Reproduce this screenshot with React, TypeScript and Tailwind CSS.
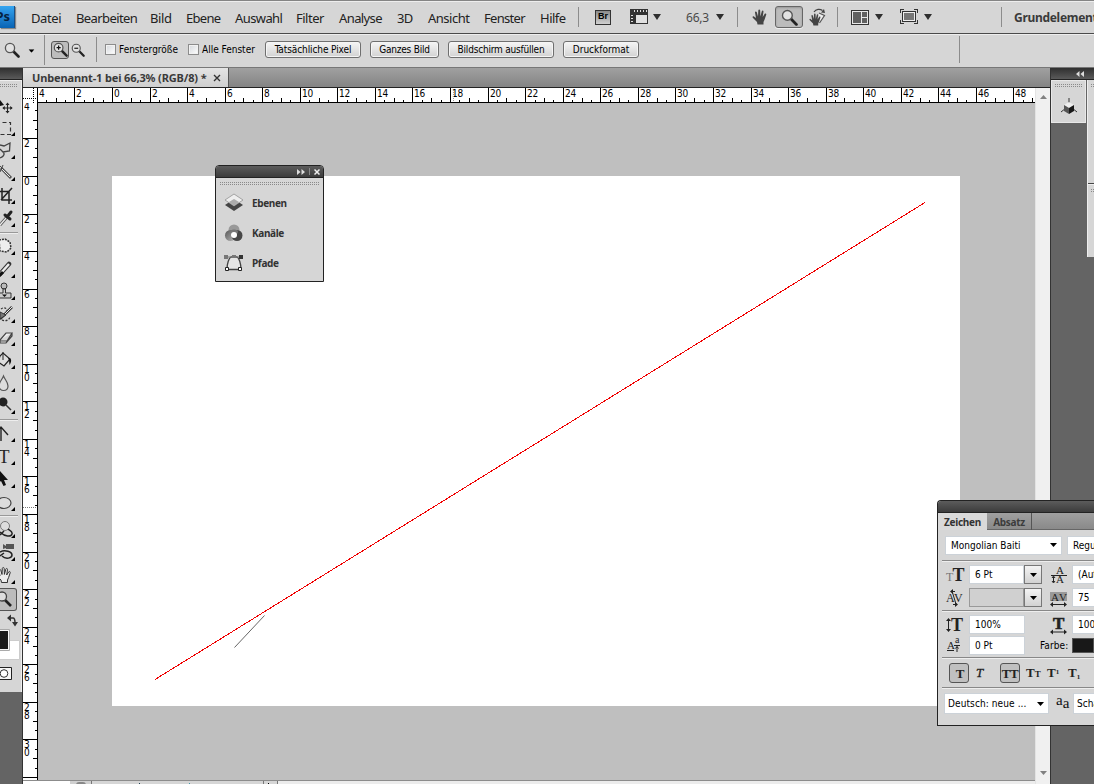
import React from "react";

const SMALL = "font-['DejaVu_Sans_Condensed','DejaVu_Sans',sans-serif] text-[10px] text-black whitespace-nowrap";
const UI = "font-['Noto_Sans','Open_Sans',sans-serif] whitespace-nowrap";

const Caret = ({ className = "" }: { className?: string }) => (
  <svg width="8" height="6" viewBox="0 0 8 6" className={"shrink-0 " + className}>
    <path d="M0 0H8L4 6Z" fill="#2f2f2f" />
  </svg>
);
const SmallCaret = ({ className = "" }: { className?: string }) => (
  <svg width="7" height="4" viewBox="0 0 7 4" className={"shrink-0 " + className}>
    <path d="M0 0H7L3.5 4Z" fill="#000" />
  </svg>
);

const menus: { label: string; cls: string }[] = [
  { label: "Datei", cls: "w-[45px] tracking-[-0.4px]" },
  { label: "Bearbeiten", cls: "w-[74px] tracking-[-0.6px]" },
  { label: "Bild", cls: "w-[36px] tracking-[-0.4px]" },
  { label: "Ebene", cls: "w-[49px] tracking-[-0.7px]" },
  { label: "Auswahl", cls: "w-[61px] tracking-[-0.6px]" },
  { label: "Filter", cls: "w-[43px] tracking-[-0.5px]" },
  { label: "Analyse", cls: "w-[58px] tracking-[-0.6px]" },
  { label: "3D", cls: "w-[31px] tracking-[-0.6px]" },
  { label: "Ansicht", cls: "w-[56px] tracking-[-0.5px]" },
  { label: "Fenster", cls: "w-[56px] tracking-[-0.7px]" },
  { label: "Hilfe", cls: "w-[38px] tracking-[-0.5px]" },
];

const HAND =
  "M5.5 15.5 L5 13 L1 9 C0 8 .8 6.8 2 7.4 L4 9 L3 3.5 C2.8 2.2 4.4 2 4.8 3.2 L6 7.5 L6.3 1.5 C6.4 .2 8.1 .2 8.2 1.5 L8.4 7.4 L9.8 2.2 C10.2 1 11.7 1.4 11.5 2.6 L10.7 8 L12.6 5 C13.3 4 14.7 4.6 14.2 5.8 L12.6 10.5 L11.5 13 V15.5Z";

const Lens = ({ sign = "", size = 16 }: { sign?: string; size?: number }) => (
  <svg width={size} height={size} viewBox="0 0 16 16" className="shrink-0">
    <path d="M9.5 9.5L14.5 14.5" stroke="#222" strokeWidth="2.6" strokeLinecap="round" />
    <circle cx="6" cy="6" r="4.6" fill="#e2e2e2" stroke="#555" strokeWidth="1.3" />
    {sign !== "" && <path d="M3.8 6H8.2" stroke="#111" strokeWidth="1.3" />}
    {sign === "+" && <path d="M6 3.8V8.2" stroke="#111" strokeWidth="1.3" />}
  </svg>
);

function MenuBar() {
  return (
    <div className="flex h-[34px] shrink-0 items-center border-b border-b-[#4a4a4a] border-t border-t-[#858585] bg-[#d6d6d6] shadow-[inset_0_1px_0_#eee]">
      <div className="flex h-[22px] w-[15px] shrink-0 items-center justify-end overflow-hidden border-r border-[#1a4f86] bg-linear-to-b from-[#35a5f0] to-[#0763b4] shadow-[1px_1px_1px_#888]">
        <span className={UI + " pr-[4px] text-[13px] font-bold text-[#06233f]"}>Ps</span>
      </div>
      <div className={UI + " flex pl-[16px] pt-[2px] text-[13px] leading-[18px] text-[#222]"}>
        {menus.map((m) => (
          <span key={m.label} className={m.cls + " shrink-0"}>{m.label}</span>
        ))}
      </div>
      <div className="h-5 w-px shrink-0 bg-[#8c8c8c]" />
      <div className="ml-[16px] flex h-[15px] w-4 shrink-0 items-center justify-center border border-[#333] bg-linear-to-b from-[#8a8a8a] to-[#d0d0d0] font-['Liberation_Sans',sans-serif] text-[9px] font-bold text-black">
        Br
      </div>
      <svg width="18" height="16" viewBox="0 0 18 16" className="ml-[19px] shrink-0" shapeRendering="crispEdges">
        <path d="M0 0H18V5H5V15H0Z" fill="#333" />
        <path d="M5 5H17.5V14.5H5Z" fill="#e0e0e0" stroke="#333" />
        <path d="M4.500 1V3M7.500 1V3M10.500 1V3M13.500 1V3M16.500 1V3M1 6.500H3M1 9.500H3M1 12.500H3" stroke="#ddd" />
      </svg>
      <Caret className="ml-[5px]" />
      <span className={UI + " ml-[25px] w-[23px] pt-px text-[12px] text-[#4a4a4a] tracking-[-0.2px]"}>66,3</span>
      <Caret className="ml-[7px]" />
      <div className="ml-[13px] h-5 w-px shrink-0 bg-[#8c8c8c]" />
      <svg width="16" height="16" viewBox="0 0 16 16" className="ml-[14px] shrink-0"><path d={HAND} fill="#444" /></svg>
      <div className="ml-[7px] flex h-[22px] w-[28px] shrink-0 items-center justify-center rounded-[3px] border border-[#666] bg-[#bcbcbc] shadow-[inset_0_1px_2px_#999,0_1px_0_#eee]">
        <Lens size={17} />
      </div>
      <svg width="18" height="18" viewBox="0 0 18 18" className="ml-[6px] shrink-0">
        <path d="M10 5L15.5 7.5L10.5 15" fill="#eee" stroke="#555" strokeWidth="1.2" />
        <g transform="translate(0 5) scale(.8)"><path d={HAND} fill="#444" /></g>
        <path d="M5 4C7 .8 11 .6 13.5 2.5" fill="none" stroke="#444" strokeWidth="1.2" />
        <path d="M12 4.5L16 5L15 1Z" fill="#444" />
      </svg>
      <div className="ml-[10px] h-5 w-px shrink-0 bg-[#8c8c8c]" />
      <svg width="18" height="15" viewBox="0 0 18 15" className="ml-[13px] shrink-0" shapeRendering="crispEdges">
        <path d="M.5 .5H17.5V14.5H.5Z" fill="#e8e8e8" stroke="#333" />
        <path d="M2 2H10V13H2ZM11 2H16V7H11ZM11 8H16V13H11Z" fill="#606060" />
      </svg>
      <Caret className="ml-[6px]" />
      <svg width="18" height="16" viewBox="0 0 18 16" className="ml-[17px] shrink-0" shapeRendering="crispEdges">
        <path d="M.5 4V.5H4M14 .5H17.5V4M17.5 11V14.5H14M4 14.5H.5V11" fill="none" stroke="#333" />
        <path d="M2.5 2.5H15.5V12.5H2.5Z" fill="#eee" stroke="#333" />
        <path d="M4 4H14V11H4Z" fill="#777" />
      </svg>
      <Caret className="ml-[6px]" />
      <div className="ml-[69px] h-5 w-px shrink-0 bg-[#8c8c8c]" />
      <span className={UI + " ml-[12px] pt-[2px] text-[12px] font-bold tracking-[-0.3px] text-[#3a3a3a]"}>Grundelemente</span>
    </div>
  );
}

const Check = ({ label, cls }: { label: string; cls: string }) => (
  <div className={"flex shrink-0 items-center " + cls}>
    <span className="size-[11px] border border-[#8c8c8c] bg-linear-to-br from-[#d5d8dc] to-white shadow-[inset_0_0_0_1px_#f2f2f2]" />
    <span className={SMALL + " ml-[3px]"}>{label}</span>
  </div>
);
const Btn = ({ label, cls }: { label: string; cls: string }) => (
  <button className={SMALL + " flex h-[17px] shrink-0 items-center justify-center rounded-[3px] border border-[#6f6f6f] bg-linear-to-b from-[#f6f6f6] to-[#d2d2d2] shadow-[inset_0_0_0_1px_#f5f5f5] " + cls}>
    {label}
  </button>
);

function OptionsBar() {
  return (
    <div className="flex h-[34px] shrink-0 items-center border-b border-b-[#777] border-t border-t-[#eee] bg-[#d6d6d6] pb-[3px]">
      <div className="ml-[4px] flex"><Lens size={16} /></div>
      <SmallCaret className="ml-[8px] mt-[2px] scale-[0.85]" />
      <div className="ml-[9px] h-[30px] w-px shrink-0 bg-[#8c8c8c]" />
      <div className="ml-[6px] flex h-[18px] w-[18px] shrink-0 items-center justify-center rounded-[3px] border border-[#555] bg-[#bdbdbd]"><Lens sign="+" size={15} /></div>
      <div className="ml-[2px] flex"><Lens sign="-" size={14} /></div>
      <div className="ml-[11px] h-[25px] w-px shrink-0 bg-[#8c8c8c]" />
      <Check label="Fenstergröße" cls="ml-[8px] w-[83px]" />
      <Check label="Alle Fenster" cls="w-[77px]" />
      <Btn label="Tatsächliche Pixel" cls="w-[96px] tracking-[-0.1px]" />
      <Btn label="Ganzes Bild" cls="ml-[9px] w-[69px] tracking-[-0.2px]" />
      <Btn label="Bildschirm ausfüllen" cls="ml-[9px] w-[106px] tracking-[-0.2px]" />
      <Btn label="Druckformat" cls="ml-[9px] w-[76px]" />
      <div className="ml-[320px] h-[27px] w-px shrink-0 bg-[#8c8c8c]" />
    </div>
  );
}

const Grip = ({ width, className = "" }: { width: number; className?: string }) => (
  <svg width={width} height="3" viewBox={`0 0 ${width} 3`} className={"shrink-0 " + className} shapeRendering="crispEdges">
    <path d={`M0 .5H${width}M0 2.5H${width}`} stroke="#8a8a8a" strokeDasharray="1 1" />
  </svg>
);

const Corner = () => <path d="M15 19V15L11 19Z" fill="#000" />;

const tools: { id: string; art: React.ReactNode; gap?: boolean; nofly?: boolean }[] = [
  { id: "move", nofly: true, art: <><path d="M0 6L4 11L0 12Z" fill="#111" /><path d="M7.5 9.5V18.5M3 14H12" stroke="#222" strokeWidth="1.1" /><path d="M5.5 11L7.5 8.5L9.5 11ZM5.5 17L7.5 19.5L9.5 17ZM4.8 12L2.3 14L4.8 16ZM10.2 12L12.7 14L10.2 16Z" fill="#222" /></> },
  { id: "marquee", art: <path d="M-4 5.5H10.5V17.5H-4" fill="none" stroke="#333" strokeWidth="1.2" strokeDasharray="4 2.5" /> },
  { id: "lasso", art: <path d="M0 5L4 6L10 3L9.5 11L3 12L0 9M3 12C6 15 2 17 0 18" fill="none" stroke="#444" strokeWidth="1.3" /> },
  { id: "wand", art: <><path d="M1 6L11 16" stroke="#555" strokeWidth="3" /><path d="M1 6L10 15" stroke="#eee" strokeWidth="1" /><path d="M-1 3L4 8M0 10L3 3" stroke="#444" /></> },
  { id: "crop", art: <path d="M2 3V15H12M0 6.5H9V19M1 15L12 3" fill="none" stroke="#222" strokeWidth="1.5" /> },
  { id: "eyedropper", art: <><path d="M0 17L7 9" stroke="#555" strokeWidth="3" /><path d="M0 17L7 9" stroke="#eee" strokeWidth="1.2" /><path d="M5 7L10 11M7 9L11 4" stroke="#222" strokeWidth="3" strokeLinecap="round" /></> },
  { id: "heal", gap: true, art: <path d="M-1 4L5 3L10 6L11 12L7 16L0 15Z" fill="#eee" stroke="#333" strokeWidth="1.5" strokeDasharray="2 1" /> },
  { id: "brush", art: <><path d="M0 15L9 5" stroke="#333" strokeWidth="4.5" strokeLinecap="round" /><path d="M1 14L9 5" stroke="#eee" strokeWidth="2.4" /><path d="M-1 17L3 13" stroke="#111" strokeWidth="3" /></> },
  { id: "stamp", art: <><circle cx="4" cy="5" r="3" fill="#bbb" stroke="#333" /><path d="M3 8H5.5V12H11V17H-2V12H3Z" fill="#ccc" stroke="#333" /><path d="M2 13.5H7L4.5 16Z" fill="#111" /></> },
  { id: "history", art: <><path d="M1 5C5 2 8 5 7 9M2 16C7 18 10 15 10 12" fill="none" stroke="#333" strokeDasharray="2 1.5" strokeWidth="1.2" /><path d="M0 15L12 3" stroke="#333" strokeWidth="2.5" /><path d="M5 10L12 3" stroke="#eee" strokeWidth="1" /><path d="M0 8L6 11L0 15Z" fill="#777" stroke="#333" /></> },
  { id: "eraser", art: <path d="M0 13L6 6H12L7 14H0ZM0 13V16H6L12 9V6" fill="#eee" stroke="#444" strokeWidth="1.2" /> },
  { id: "bucket", art: <><path d="M0 6L3 3L10 9L4 16L-2 12Z" fill="#ddd" stroke="#222" strokeWidth="1.2" /><path d="M3 10V2" stroke="#222" /><path d="M8 8C13 8 11 13 9.5 15L9 10Z" fill="#111" /></> },
  { id: "drop", art: <path d="M3.5 3C5 7 8 9 8 13C8 19-1 19-1 13C-1 9 2 7 3.5 3Z" fill="#ddd" stroke="#555" strokeWidth="1.2" /> },
  { id: "dodge", art: <><circle cx="3" cy="7" r="4.5" fill="#222" /><path d="M6 10L11 15" stroke="#333" strokeWidth="1.5" /></> },
  { id: "pen", gap: true, art: <path d="M1 18V5M-3 9L1 4L8 12" fill="none" stroke="#222" strokeWidth="1.4" /> },
  { id: "type", art: <text x="-1.5" y="17" fontFamily="Liberation Serif, serif" fontSize="18" fill="#222">T</text> },
  { id: "select", art: <path d="M0 2L8 11L4 11L6 16L3.5 17L1 12L-3 15Z" fill="#111" /> },
  { id: "ellipse", art: <ellipse cx="4" cy="11" rx="7" ry="5.5" fill="#ddd" stroke="#444" strokeWidth="1.2" /> },
  { id: "orbit", gap: true, art: <><circle cx="5" cy="7" r="4.5" fill="#ddd" stroke="#777" /><path d="M0 13C5 18 11 18 12 15C13 12 9 11 8 10M0 16L4 12" fill="none" stroke="#222" strokeWidth="1.5" /></> },
  { id: "camera", art: <><path d="M6 2H14V7H6ZM3 2L6 4V6L3 7Z" fill="#555" /><path d="M0 10C5 7 12 10 12 13C12 16 6 18 2 14M0 14L4 11" fill="none" stroke="#222" strokeWidth="1.5" /></> },
  { id: "hand", art: <g transform="translate(-4 2)"><path d={HAND} fill="#eee" stroke="#333" /></g> },
];

function ToolBar() {
  return (
    <div className="flex h-full w-[23px] shrink-0 flex-col border-r border-[#333] bg-[#646464]">
      <div className="h-[12px] shrink-0 border-b border-[#222] bg-linear-to-b from-[#303030] to-[#5a5a5a]" />
      <div className="flex h-[612px] shrink-0 flex-col bg-[#d6d6d6] shadow-[inset_-1px_1px_0_#eee]">
        <Grip width={18} className="mt-[4px]" />
        <div className="h-[7px] shrink-0" />
        {tools.map((t) => (
          <React.Fragment key={t.id}>
            {t.gap && <div className="mb-[2px] mt-[1px] h-[2px] w-[18px] shrink-0 border-b border-[#eee] border-t border-t-[#999]" />}
            <svg width="21" height="22.8" viewBox="0 0 21 22.8" className="block shrink-0">
              {t.art}
              {!t.nofly && <Corner />}
            </svg>
          </React.Fragment>
        ))}
        <div className="flex h-[23px] w-[17px] shrink-0 items-center overflow-hidden rounded-r-[3px] border border-l-0 border-[#555] bg-[#bcbcbc]">
          <svg width="16" height="20" viewBox="0 0 16 20"><path d="M5 11L11 17" stroke="#222" strokeWidth="2.6" /><circle cx="2" cy="7.500" r="4.5" fill="#ddd" stroke="#444" strokeWidth="1.3" /></svg>
        </div>
        <svg width="21" height="72" viewBox="0 611 21 72" className="shrink-0">
          <path d="M9 618H13Q15 618 15 623" fill="none" stroke="#333" strokeWidth="1.5" />
          <path d="M11 614.500L7 618L11 621.500ZM12 622H18L15 626.500Z" fill="#333" />
          <path d="M-1 640.500H19.500V659.500H-1Z" fill="#fff" stroke="#ccc" />
          <path d="M-1 629.500H9.500V650.500H-1Z" fill="#f5f5f5" stroke="#aaa" />
          <path d="M0 631H8V649H0Z" fill="#181818" />
          <path d="M-1 667.500H11.500V679.500H-1Z" fill="#f6f6f6" stroke="#222" />
          <circle cx="4" cy="673.500" r="3.800" fill="#fff" stroke="#333" />
        </svg>
      </div>
    </div>
  );
}

const STEP = 37.56;

function HRuler() {
  const ticks: React.ReactNode[] = [];
  for (let i = -8; i <= 98; i++) {
    const x = Math.round(112 - 23 + (i * STEP) / 4);
    const len = i % 4 === 0 ? 15 : i % 2 === 0 ? 5 : 3;
    ticks.push(<rect key={i} x={x} y={15 - len} width="1" height={len} fill="#000" />);
    if (i % 4 === 0)
      ticks.push(
        <text key={"t" + i} x={x + 2} y="8.5" fontSize="10" fill="#000" fontFamily="DejaVu Sans Condensed, DejaVu Sans, sans-serif" letterSpacing="-0.2">
          {Math.abs(i / 2)}
        </text>,
      );
  }
  return (
    <svg width="1012" height="15" viewBox="0 0 1012 15" className="block shrink-0 bg-white" shapeRendering="crispEdges">
      <path d="M0 0H14V15H0Z" fill="#fff" />
      <path d="M10.500 0V15M0 10.500H14" stroke="#000" strokeDasharray="1 1" />
      <path d="M14.500 0V15" stroke="#999" />
      {ticks}
      <path d="M430.500 2V14" stroke="#999" strokeDasharray="1 1" />
      <path d="M14 14.500H1012" stroke="#000" />
    </svg>
  );
}

function VRuler() {
  const ticks: React.ReactNode[] = [];
  for (let i = -7; i <= 64; i++) {
    const y = Math.round(176 - 103 + (i * STEP) / 4);
    const len = i % 4 === 0 ? 15 : i % 2 === 0 ? 5 : 3;
    ticks.push(<rect key={i} x={15 - len} y={y} width={len} height="1" fill="#000" />);
    if (i % 4 === 0 && i < 64)
      String(Math.abs(i / 2)).split("").forEach((d, k) =>
        ticks.push(
          <text key={"t" + i + k} x="1" y={y + 9 + k * 8} fontSize="10" fill="#000" fontFamily="DejaVu Sans Condensed, DejaVu Sans, sans-serif">
            {d}
          </text>,
        ),
      );
  }
  return (
    <svg width="15" height="677" viewBox="0 0 15 677" className="block shrink-0 bg-white" shapeRendering="crispEdges">
      {ticks}
      <text x="1" y="7" fontSize="10" fill="#000" fontFamily="DejaVu Sans Condensed, DejaVu Sans, sans-serif">4</text>
      <path d="M14.500 0V677" stroke="#000" />
      <path d="M0 404.500H14" stroke="#777" strokeDasharray="1 1" />
    </svg>
  );
}

function Document() {
  return (
    <div className="flex h-full w-[1027px] shrink-0 flex-col">
      <div className="flex h-[20px] shrink-0 items-stretch border-b border-[#222] bg-linear-to-b from-[#a0a0a0] to-[#848484]">
        <div className="flex w-[206px] shrink-0 items-center border-r border-[#555] bg-linear-to-b from-[#e4e4e4] to-[#cfcfcf] pl-[9px]">
          <span className={UI + " w-[181px] pt-px text-[11px] font-bold tracking-[-0.13px] text-[#3a3a3a]"}>Unbenannt-1 bei 66,3% (RGB/8) *</span>
          <svg width="8" height="8" viewBox="0 0 8 8" className="mt-px"><path d="M1 1L7 7M7 1L1 7" stroke="#333" strokeWidth="1.400" /></svg>
        </div>
      </div>
      <div className="flex min-h-0 flex-1">
        <div className="flex w-[1012px] shrink-0 flex-col">
          <HRuler />
          <div className="flex h-[677px] shrink-0">
            <VRuler />
            <div className="w-[997px] bg-[#bfbfbf] pl-[74px] pt-[73px]">
              <svg width="848" height="530" viewBox="112 176 848 530" className="block bg-white">
                <path d="M155 679.500L925 202.500" stroke="#f00000" shapeRendering="crispEdges" />
                <path d="M234.500 647.500L264.500 615.500" stroke="#555" strokeWidth="0.9" />
              </svg>
            </div>
          </div>
          <div className="flex h-[4px] shrink-0 overflow-hidden border-t border-[#8c8c8c]">
            <div className="w-[47px] bg-white" />
            <div className="flex w-[22px] justify-center border-r border-[#777] bg-[#d0d0d0]"><span className="mt-px h-[6px] w-[10px] rounded-full border-2 border-[#888]" /></div>
            <div className="flex w-[172px] gap-[49px] border-r border-[#777] bg-[#d6d6d6] pl-[47px] pt-[2px]">
              <div className="h-px w-px bg-[#245]" />
              <div className="h-px w-px bg-[#49a]" />
            </div>
            <div className="w-[14px] border-r border-[#777] bg-[#d6d6d6] pl-[4px] pt-[2px]"><div className="h-px w-px bg-black" /></div>
            <div className="flex-1 bg-[#ececec]" />
          </div>
        </div>
        <div className="flex w-[15px] shrink-0 flex-col items-center justify-between border-l border-[#e3e3e3] bg-[#f0f0f0] pb-[9px] pt-[7px]">
          <svg width="7" height="4" viewBox="0 0 7 4"><path d="M0 4L3.500 0L7 4Z" fill="#808080" /></svg>
          <svg width="7" height="4" viewBox="0 0 7 4"><path d="M0 0L3.500 4L7 0Z" fill="#808080" /></svg>
        </div>
      </div>
    </div>
  );
}

function Dock() {
  return (
    <div className="flex h-full w-[44px] shrink-0 flex-col border-l border-[#333] bg-[#646464]">
      <div className="flex h-[12px] shrink-0 items-center border-b border-[#222] bg-linear-to-b from-[#303030] to-[#5a5a5a] pl-[25px]">
        <svg width="8" height="6" viewBox="0 0 8 6"><path d="M0 3L3.500 0V6ZM4.500 3L8 0V6Z" fill="#ddd" /></svg>
      </div>
      <div className="flex">
        <div className="flex h-[43px] w-[35px] flex-col items-center border border-[#e8e8e8] bg-[#d6d6d6] pt-[3px]">
          <Grip width={27} />
          <svg width="16" height="17" viewBox="0 0 16 17" className="mt-[11px]">
            <path d="M8 0V7M5 10L0 14M11 10L16 14" stroke="#333" />
            <path d="M8 4L13 7L8 10L3 7Z" fill="#eee" />
            <path d="M3 7L8 10V16L3 13Z" fill="#555" />
            <path d="M13 7L8 10V16L13 13Z" fill="#181818" />
          </svg>
        </div>
        <div className="ml-px flex h-[177px] w-[7px] flex-col border-l border-l-[#eee] bg-[#d6d6d6] pl-[3px]">
          <Grip width={4} className="mt-[4px]" />
          <div className="-ml-[3px] mt-[96px] h-[2px] border-b border-[#eee] border-t border-t-[#444]" />
          <Grip width={4} className="mt-[4px]" />
        </div>
      </div>
    </div>
  );
}

function LayersPanel() {
  const row = "flex h-[30px] items-center pl-[7px]";
  const label = UI + " ml-[8px] text-[10px] font-bold tracking-[-0.35px] text-[#333]";
  return (
    <div className="absolute left-[215px] top-[165px] flex h-[117px] w-[109px] flex-col overflow-hidden rounded-t-[4px] border border-[#222] bg-[#d6d6d6]">
      <div className="flex h-[12px] shrink-0 items-center justify-end border-b border-[#222] bg-linear-to-b from-[#5c5c5c] to-[#3c3c3c] pr-[3px]">
        <svg width="8" height="6" viewBox="0 0 8 6"><path d="M0 0L3.500 3L0 6ZM4.500 0L8 3L4.500 6Z" fill="#ddd" /></svg>
        <div className="ml-[4px] h-[7px] w-px bg-[#888]" />
        <svg width="6" height="6" viewBox="0 0 6 6" className="ml-[4px]"><path d="M.5 .5L5.500 5.500M5.500 .5L.5 5.500" stroke="#eee" strokeWidth="1.500" /></svg>
      </div>
      <Grip width={99} className="mx-[4px] mb-[3px] mt-[4px]" />
      <div className={row}>
        <svg width="21" height="20" viewBox="0 0 21 20"><path d="M2 12L11 6L20 12L11 18Z" fill="#444" /><path d="M2 7L11 1L20 7L11 13Z" fill="#eee" stroke="#888" strokeWidth=".7" /><path d="M6 9L11 6L16 9L11 13Z" fill="#aaa" /></svg>
        <span className={label}>Ebenen</span>
      </div>
      <div className={row}>
        <svg width="21" height="20" viewBox="0 0 21 20">
          <defs>
            <linearGradient id="ch" x1="0" y1="0" x2="1" y2="1"><stop offset="0" stopColor="#555" /><stop offset="1" stopColor="#bbb" /></linearGradient>
          </defs>
          <circle cx="11" cy="7" r="5.500" fill="#999" /><circle cx="7.500" cy="12.500" r="5.500" fill="url(#ch)" /><circle cx="14" cy="12.500" r="5.500" fill="#484848" /><path d="M7 8C9 6 13 6 15 8C15 11 13 12 11 12C9 12 7 11 7 8Z" fill="#777" /><circle cx="11" cy="12" r="3" fill="#fff" />
        </svg>
        <span className={label}>Kanäle</span>
      </div>
      <div className={row}>
        <svg width="21" height="20" viewBox="0 0 21 20"><path d="M4 16.500C4 10 6 5 8 4H14C16 5 18 10 18 16.500Z" fill="#e5e5e5" stroke="#444" strokeWidth="1.300" /><path d="M1 4H20" stroke="#777" /><path d="M1 2H5V6H1ZM9 2H13V5H9Z" fill="#777" /><path d="M16 2H20V6H16Z" fill="#333" /><path d="M2.500 14.500H5.500V17.500H2.500ZM15.500 14.500H18.500V17.500H15.500Z" fill="#fff" stroke="#222" /></svg>
        <span className={label}>Pfade</span>
      </div>
    </div>
  );
}

const Drop = () => (
  <div className="flex h-full w-[18px] shrink-0 items-center justify-center border border-[#777] bg-linear-to-b from-[#f4f4f4] to-[#d2d2d2]"><SmallCaret /></div>
);
const BOX = SMALL + " flex shrink-0 items-center border border-[#ccd2d8] bg-white";
const FIELD = BOX + " h-[19px] pl-[5px]";
const SERIF = "Liberation Serif, serif";
const Glyph = ({ children, w = 20 }: { children: React.ReactNode; w?: number }) => (
  <svg width={w} height="20" viewBox={`0 0 ${w} 20`} className="shrink-0" fontFamily={SERIF} fill="#222" stroke="none">{children}</svg>
);

function CharacterPanel() {
  return (
    <div className="absolute left-[937px] top-[500px] flex h-[226px] w-[157px] flex-col overflow-hidden rounded-tl-[4px] border border-r-0 border-[#222] bg-[#d6d6d6]">
      <div className="h-[12px] shrink-0 border-b border-[#222] bg-linear-to-b from-[#5c5c5c] to-[#3c3c3c]" />
      <div className={UI + " flex h-[17px] shrink-0 bg-linear-to-b from-[#a0a0a0] to-[#888] text-[10px] font-bold tracking-[-0.3px]"}>
        <div className="flex w-[49px] items-center justify-center bg-[#d9d9d9] pt-px text-[#333]">Zeichen</div>
        <div className="flex w-[45px] items-center justify-center border-r border-[#555] pt-px text-[#3c3c3c] shadow-[inset_0_-1px_0_#666]">Absatz</div>
        <div className="flex-1 shadow-[inset_0_-1px_0_#666]" />
      </div>
      <div className="flex h-[30px] shrink-0 items-center pl-[7px]">
        <div className={FIELD + " w-[117px] justify-between pr-[4px]"}>Mongolian Baiti<SmallCaret /></div>
        <div className={FIELD + " ml-[5px] w-[60px]"}>Regular</div>
      </div>
      <div className="ml-[4px] h-[2px] shrink-0 border-b border-[#eee] border-t border-t-[#888]" />
      <div className="flex h-[25px] shrink-0 items-center pl-[7px]">
        <Glyph><text x="1" y="16" fontSize="12" fill="#777">T</text><text x="7.500" y="16" fontSize="18" fontWeight="bold">T</text></Glyph>
        <div className={FIELD + " ml-[4px] w-[55px]"}>6 Pt</div><div className="flex h-[19px]"><Drop /></div>
        <div className="ml-[7px] flex"><Glyph><text x="7" y="9" fontSize="11">A</text><text x="7" y="18" fontSize="11">A</text><path d="M2 10.500H18M4.500 12V17M3 13L4.500 11L6 13M3 16L4.500 18L6 16" fill="none" stroke="#222" /></Glyph></div>
        <div className={FIELD + " ml-[3px] w-[60px]"}>(Auto)</div>
      </div>
      <div className="flex h-[21px] shrink-0 items-center pl-[7px]">
        <Glyph><text x="1" y="14" fontSize="12">A</text><text x="9" y="14" fontSize="12">V</text><path d="M7 3L11 16M6 3.500H10M8 16.500H12" fill="none" stroke="#222" /><path d="M8 1L5 3.500L8 6ZM10 14L13 16.500L10 19Z" /></Glyph>
        <div className="ml-[4px] h-[19px] w-[55px] shrink-0 border border-[#999] bg-[#d0d0d0]" /><div className="flex h-[19px] shrink-0"><Drop /></div>
        <div className="ml-[7px] flex shrink-0"><Glyph><path d="M1 4H18V13H1Z" fill="#999" /><text x="2" y="12.500" fontSize="11">A</text><text x="10" y="12.500" fontSize="11">V</text><path d="M3 16.500H16" stroke="#222" /><path d="M1 16.500L4 14V19ZM18 16.500L15 14V19Z" /></Glyph></div>
        <div className={FIELD + " ml-[3px] w-[60px]"}>75</div>
      </div>
      <div className="ml-[4px] mt-[2px] h-[2px] shrink-0 border-b border-[#eee] border-t border-t-[#888]" />
      <div className="mt-[2px] flex h-[21px] shrink-0 items-center pl-[7px]">
        <Glyph><text x="6" y="16" fontSize="18" fontWeight="bold">T</text><path d="M3.500 4V16" stroke="#222" /><path d="M1 6L3.500 3L6 6ZM1 14L3.500 17L6 14Z" /></Glyph>
        <div className={FIELD + " ml-[4px] w-[56px]"}>100%</div>
        <div className="ml-[24px] flex"><Glyph><text x="4" y="14" fontSize="17" fontWeight="bold" stroke="#222" strokeWidth=".6">T</text><path d="M3 17H16" stroke="#222" /><path d="M1 17L4 14.500V19.500ZM18 17L15 14.500V19.500Z" /></Glyph></div>
        <div className={FIELD + " ml-[3px] w-[60px]"}>100%</div>
      </div>
      <div className="flex h-[21px] shrink-0 items-center pl-[7px]">
        <Glyph><text x="2" y="13" fontSize="11">A</text><text x="10" y="7" fontSize="10">a</text><path d="M2 14.500H9M9 9.500H15M12 10.500V16M10.500 12.500L12 10.500L13.500 12.500" fill="none" stroke="#222" /></Glyph>
        <div className={FIELD + " ml-[4px] w-[56px]"}>0 Pt</div>
        <span className={SMALL + " ml-[15px] w-[32px] tracking-[0.1px]"}>Farbe:</span>
        <div className="h-[15px] flex-1 border border-[#555] bg-[#181818]" />
      </div>
      <div className="ml-[4px] mt-[1px] h-[2px] shrink-0 border-b border-[#eee] border-t border-t-[#888]" />
      <div className="flex h-[28px] shrink-0 items-center pl-[11px] font-['Liberation_Serif',serif] text-[13px] font-bold text-[#222]">
        <div className="flex h-[20px] w-[20px] items-center justify-center rounded-[3px] border border-[#555] bg-[#c0c0c0] pl-[2px] pt-[2px]">T</div>
        <span className="ml-[7px] w-[24px] font-normal italic [-webkit-text-stroke:0.3px_#222]">T</span>
        <div className="flex h-[20px] w-[20px] items-center justify-center rounded-[3px] border border-[#555] bg-[#c0c0c0] pt-[2px] tracking-[-0.5px]">TT</div>
        <span className="ml-[6px] w-[21px]">T<span className="text-[9px]">T</span></span>
        <span className="w-[21px]">T<sup className="text-[7px]">1</sup></span>
        <span>T<sub className="text-[7px]">1</sub></span>
      </div>
      <div className="ml-[4px] h-[2px] shrink-0 border-b border-[#eee] border-t border-t-[#888]" />
      <div className="mt-[4px] flex h-[21px] shrink-0 items-center pl-[6px]">
        <div className={BOX + " h-[21px] w-[105px] justify-between pl-[3px] pr-[4px] tracking-[0.1px]"}>Deutsch: neue ...<SmallCaret /></div>
        <span className="ml-[7px] w-[17px] shrink-0 font-['Liberation_Serif',serif] text-[15px] leading-none text-[#111]"><span className="relative -top-[3px]">a</span>a</span>
        <div className={BOX + " h-[21px] w-[60px] pl-[3px]"}>Scharf</div>
      </div>
    </div>
  );
}

export default function App() {
  return (
    <div className="relative flex h-[784px] w-[1094px] flex-col overflow-hidden bg-[#646464]">
      <MenuBar />
      <OptionsBar />
      <div className="flex h-[716px] shrink-0">
        <ToolBar />
        <Document />
        <Dock />
      </div>
      <LayersPanel />
      <CharacterPanel />
    </div>
  );
}
